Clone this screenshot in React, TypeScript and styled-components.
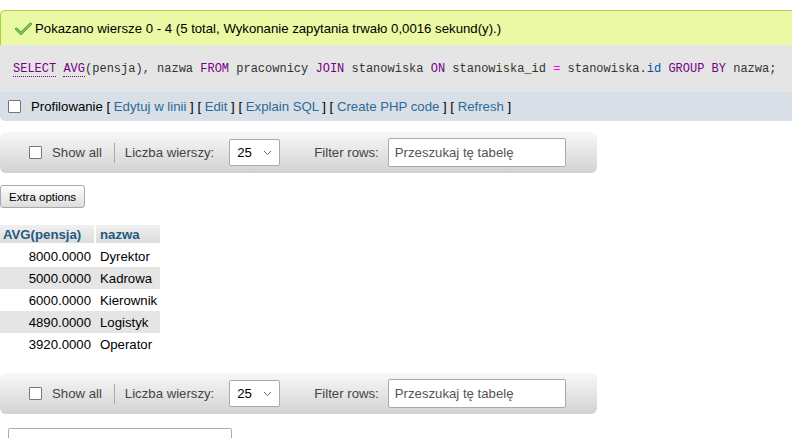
import styled, { createGlobalStyle } from "styled-components";

const GlobalStyle = createGlobalStyle`
	html, body {
		margin: 0;
		padding: 0;
		background: #fff;
		overflow: hidden;
	}
	body {
		font-family: "Liberation Sans", Arial, sans-serif;
		font-size: 13.2px;
		color: #000;
	}
`;

const rows = [
	{ avg: "8000.0000", name: "Dyrektor" },
	{ avg: "5000.0000", name: "Kadrowa" },
	{ avg: "6000.0000", name: "Kierownik" },
	{ avg: "4890.0000", name: "Logistyk" },
	{ avg: "3920.0000", name: "Operator" },
];

function CheckIcon() {
	return (
		<svg width="17" height="13" viewBox="0 0 17 13">
			<path d="M1.5 7 L6 11.5 L15.5 2" fill="none" stroke="#5aa83a" strokeWidth="3" strokeLinecap="round" strokeLinejoin="round" />
			<path d="M1.5 7 L6 11.5 L15.5 2" fill="none" stroke="#7fc35a" strokeWidth="1.2" strokeLinecap="round" strokeLinejoin="round" />
		</svg>
	);
}

function Chevron() {
	return (
		<svg width="9" height="6" viewBox="0 0 9 6">
			<path d="M1 1 L4.5 4.5 L8 1" fill="none" stroke="#666" strokeWidth="1" />
		</svg>
	);
}

function NavBar({ $top }: { $top: number }) {
	return (
		<Nav $top={$top}>
			<Box />
			<NavLabel>Show all</NavLabel>
			<Separator />
			<NavLabel>Liczba wierszy:</NavLabel>
			<Select>
				<span>25</span>
				<Chevron />
			</Select>
			<NavLabel $wide>Filter rows:</NavLabel>
			<SearchInput placeholder="Przeszukaj tę tabelę" />
		</Nav>
	);
}

export default function App() {
	return (
		<Page>
			<GlobalStyle />
			<Success>
				<CheckIcon />
				<span>Pokazano wiersze 0 - 4 (5 total, Wykonanie zapytania trwało 0,0016 sekund(y).)</span>
			</Success>
			<SqlBox>
				<code>
					<Kw $doc>SELECT</Kw> <Kw $doc>AVG</Kw>(pensja), nazwa <Kw>FROM</Kw> pracownicy <Kw>JOIN</Kw>{" "}
					stanowiska <Kw>ON</Kw> stanowiska_id <Op>=</Op> stanowiska.<Prop>id</Prop> <Kw>GROUP</Kw>{" "}
					<Kw>BY</Kw> nazwa;
				</code>
			</SqlBox>
			<ProfileBar>
				<Box />
				<span>
					Profilowanie [ <LinkText>Edytuj w linii</LinkText> ] [ <LinkText>Edit</LinkText> ] [{" "}
					<LinkText>Explain SQL</LinkText> ] [ <LinkText>Create PHP code</LinkText> ] [{" "}
					<LinkText>Refresh</LinkText> ]
				</span>
			</ProfileBar>

			<NavBar $top={11} />

			<ExtraButton>Extra options</ExtraButton>

			<DataTable>
				<thead>
					<tr>
						<Th $w={96}>AVG(pensja)</Th>
						<Th>nazwa</Th>
					</tr>
				</thead>
				<tbody>
					{rows.map((row, i) => (
						<Tr key={row.name} $odd={i % 2 === 1}>
							<Td $num>{row.avg}</Td>
							<Td>{row.name}</Td>
						</Tr>
					))}
				</tbody>
			</DataTable>

			<NavBar $top={18} />

			<QueryBox />
		</Page>
	);
}

const Page = styled.div`
	padding-top: 10px;
	display: flex;
	flex-direction: column;
	align-items: flex-start;
`;

const Success = styled.div`
	align-self: stretch;
	box-sizing: border-box;
	height: 35px;
	display: flex;
	align-items: center;
	gap: 3px;
	padding-left: 14px;
	background: #ebf8a4;
	border: 1px solid #a2d246;
	border-right: none;
	border-bottom: none;
	border-top-left-radius: 5px;
	color: #000;

	svg {
		margin-top: 1px;
	}
`;

const SqlBox = styled.div`
	align-self: stretch;
	height: 47px;
	display: flex;
	align-items: center;
	padding-left: 13px;
	background: #e5e5e5;

	code {
		font-family: "Liberation Mono", "DejaVu Sans Mono", monospace;
		font-size: 12px;
		color: #333;
		white-space: pre;
	}
`;

const Kw = styled.span<{ $doc?: boolean }>`
	color: #708;
	border-bottom: ${(p) => (p.$doc ? "1px dotted #708" : "none")};
`;

const Op = styled.span`
	color: #e0e;
`;

const Prop = styled.span`
	color: #05a;
`;

const ProfileBar = styled.div`
	align-self: stretch;
	height: 29px;
	display: flex;
	align-items: center;
	gap: 10px;
	padding-left: 8px;
	background: #d8dfe6;
	border-bottom-left-radius: 5px;
	color: #000;
`;

const LinkText = styled.a`
	color: #2c6a98;
	text-decoration: none;
	cursor: pointer;
`;

const Box = styled.span`
	display: inline-block;
	width: 11px;
	height: 11px;
	border: 1px solid #767676;
	border-radius: 1px;
	background: #fff;
`;

const Nav = styled.div<{ $top: number }>`
	margin-top: ${(p) => p.$top}px;
	width: 597px;
	height: 41px;
	box-sizing: border-box;
	display: flex;
	align-items: center;
	padding-left: 29px;
	border-radius: 6px;
	background: linear-gradient(#f8f8f8, #d2d2d2);
	color: #444;

	${Box} {
		margin-right: 10px;
	}
`;

const NavLabel = styled.span<{ $wide?: boolean }>`
	margin-left: ${(p) => (p.$wide ? "34px" : "0")};
	margin-right: ${(p) => (p.$wide ? "9px" : "0")};
	color: #444;
`;

const Separator = styled.span`
	width: 1px;
	height: 20px;
	background: #aaa;
	margin: 0 10px 0 12px;
`;

const Select = styled.div`
	margin-left: 15px;
	box-sizing: border-box;
	width: 51px;
	height: 27px;
	display: flex;
	align-items: center;
	justify-content: space-between;
	padding: 0 7px 0 7px;
	background: #fff;
	border: 1px solid #aaa;
	border-radius: 2px;
	color: #000;
`;

const SearchInput = styled.input`
	box-sizing: border-box;
	width: 178px;
	height: 29px;
	padding: 0 6px;
	border: 1px solid #aaa;
	border-radius: 2px;
	background: #fff;
	font-family: "Liberation Sans", Arial, sans-serif;
	font-size: 13.2px;
	color: #000;
	outline: none;

	&::placeholder {
		color: #555;
	}
`;

const ExtraButton = styled.button`
	margin-top: 12px;
	height: 23px;
	padding: 0 8px;
	border: 1px solid #aaa;
	border-radius: 3px;
	background: linear-gradient(#fff, #ddd);
	font-family: "Liberation Sans", Arial, sans-serif;
	font-size: 11.5px;
	color: #000;
`;

const DataTable = styled.table`
	margin-top: 17px;
	border-collapse: separate;
	border-spacing: 0;
`;

const Th = styled.th<{ $w?: number }>`
	box-sizing: border-box;
	width: ${(p) => (p.$w ? `${p.$w}px` : "auto")};
	height: 20px;
	padding: 0 4px 0 3px;
	text-align: left;
	font-weight: bold;
	color: #235a81;
	background: linear-gradient(#f0f0f0, #dcdcdc);
	border-right: 2px solid #fff;
	border-bottom: 2px solid #fff;

	&:last-child {
		border-right: none;
		padding-left: 4px;
	}
`;

const Tr = styled.tr<{ $odd: boolean }>`
	background: ${(p) => (p.$odd ? "#e5e5e5" : "#fff")};
`;

const Td = styled.td<{ $num?: boolean }>`
	height: 22px;
	padding: ${(p) => (p.$num ? "0 5px 0 4px" : "0 3px 0 4px")};
	text-align: ${(p) => (p.$num ? "right" : "left")};
	color: #000;
	white-space: nowrap;
`;

const QueryBox = styled.div`
	margin-top: 14px;
	margin-left: 8px;
	width: 222px;
	height: 20px;
	border: 1px solid #aaa;
	border-radius: 2px;
	background: #fff;
`;
